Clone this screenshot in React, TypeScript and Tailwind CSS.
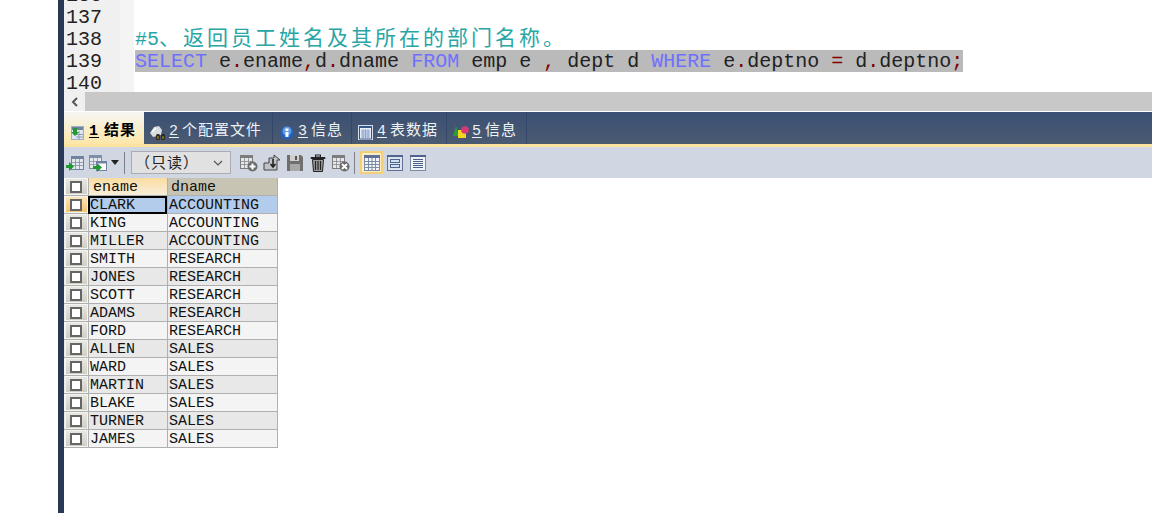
import type { ReactNode } from "react";

const MONO = "font-['Liberation_Mono','Courier_New',monospace]";
const CJK = "font-['Liberation_Mono','Noto_Sans_CJK_SC',monospace]";

const rows = [
  ["CLARK", "ACCOUNTING"],
  ["KING", "ACCOUNTING"],
  ["MILLER", "ACCOUNTING"],
  ["SMITH", "RESEARCH"],
  ["JONES", "RESEARCH"],
  ["SCOTT", "RESEARCH"],
  ["ADAMS", "RESEARCH"],
  ["FORD", "RESEARCH"],
  ["ALLEN", "SALES"],
  ["WARD", "SALES"],
  ["MARTIN", "SALES"],
  ["BLAKE", "SALES"],
  ["TURNER", "SALES"],
  ["JAMES", "SALES"],
];

function Kw({ children }: { children: ReactNode }) {
  return <span className="text-[#7070ff]">{children}</span>;
}

function Op({ children }: { children: ReactNode }) {
  return <span className="text-[#800000]">{children}</span>;
}

function Gutter({ n }: { n: number }) {
  return <div className="h-[22px] overflow-visible pl-[2px] leading-[24px]">{n}</div>;
}

function GridIcon({ x = 0, y = 0, tone = "#8a94a6" }: { x?: number; y?: number; tone?: string }) {
  return (
    <g transform={`translate(${x} ${y})`}>
      <rect x="0.5" y="0.5" width="12" height="13" fill="#e4e7ec" stroke={tone} />
      <rect x="0" y="0" width="13" height="3" fill={tone} />
      <path d="M1 6.5h11M1 9.5h11M4.5 3v10M8.5 3v10" stroke={tone} strokeOpacity="0.7" />
    </g>
  );
}

function TabIcon({ kind }: { kind: number }) {
  return (
    <svg width="16" height="16" viewBox="0 0 16 16" className="shrink-0">
      {kind === 1 && (
        <>
          <rect x="1.5" y="1.5" width="12" height="13" fill="#dfe6f0" stroke="#9fb0c6" />
          <rect x="2" y="2" width="11" height="3" fill="#6f829f" />
          <path d="M6 9.5h7M6 12h7M9 6v8" stroke="#8a9ab4" />
          <path d="M3 3h4v4h2l-4 4-4-4h2z" fill="#1f9a2c" />
        </>
      )}
      {kind === 2 && (
        <>
          <path d="M0 8l4-6 5-1 3 4-1 5-8 2z" fill="#d8dbe0" />
          <path d="M2 7l4-4" stroke="#fff" strokeWidth="1.5" />
          <rect x="6" y="9" width="4" height="6" rx="1.5" fill="#2a2a20" />
          <rect x="11" y="9" width="4" height="6" rx="1.5" fill="#2a2a20" />
          <path d="M8 11v3M13 11v3" stroke="#d0a030" />
        </>
      )}
      {kind === 3 && (
        <>
          <circle cx="8" cy="8" r="6.5" fill="#1f62c4" />
          <circle cx="8" cy="6" r="4.5" fill="#5f9be6" />
          <rect x="6.5" y="7" width="3" height="5" fill="#fff" />
          <rect x="6.5" y="3.5" width="3" height="2.5" fill="#fff" />
        </>
      )}
      {kind === 4 && (
        <>
          <rect x="0.5" y="0.5" width="14" height="14" fill="#e8eef8" stroke="#d5deea" />
          <rect x="1" y="1" width="13" height="2" fill="#35568f" />
          <path d="M1.5 3v11h12V3" fill="none" stroke="#35568f" />
          <path d="M3 6h9M3 8h9M3 10h9M3 12h9M5 4v9M7.5 4v9M10 4v9" stroke="#8ea4cc" />
        </>
      )}
      {kind === 5 && (
        <>
          <path d="M3 1l3 10H0z" fill="#2c9c3c" />
          <rect x="5" y="5" width="8" height="8" fill="#f4d820" />
          <circle cx="12" cy="5" r="3.8" fill="#d83a78" />
        </>
      )}
    </svg>
  );
}

function Tab({
  kind,
  num,
  label,
  active,
  className,
}: {
  kind: number;
  num: number;
  label: string;
  active?: boolean;
  className: string;
}) {
  return (
    <div
      className={`flex h-[32px] items-center gap-[3px] pl-[6px] pt-[9px] text-[15px] tracking-[1px] ${CJK} ${className} ${
        active
          ? "bg-gradient-to-b from-[#f6f6f2] to-[#fce6a8] font-bold text-black"
          : "border-r border-[#34466a] text-[#eef1f6]"
      }`}
    >
      <TabIcon kind={kind} />
      <span className="underline underline-offset-2">{num}</span>
      <span className={active ? "ml-[2px]" : ""}>{label}</span>
    </div>
  );
}

function ToolIcon({ kind }: { kind: string }) {
  return (
    <svg width="18" height="18" viewBox="0 0 18 18" className="shrink-0">
      {kind === "add" && (
        <>
          <GridIcon x={0} y={1} tone="#7d7d7d" />
          <circle cx="12.5" cy="12.5" r="5" fill="#6b6b6b" />
          <path d="M9.5 12.5h6M12.5 9.5v6" stroke="#fff" strokeWidth="2" />
        </>
      )}
      {kind === "dup" && (
        <>
          <path d="M1 9h5V4h5V1l6 5-3 0v10H1z" fill="#bfc3c9" stroke="#444" />
          <path d="M10 5v7M7.5 10l2.5 3 2.5-3" stroke="#222" strokeWidth="1.6" fill="none" />
        </>
      )}
      {kind === "save" && (
        <>
          <path d="M1 1h14l2 2v14H1z" fill="#6f6f6f" />
          <rect x="4" y="1" width="9" height="6" fill="#cfcfcf" />
          <rect x="9" y="2" width="2" height="4" fill="#555" />
          <rect x="4" y="10" width="10" height="7" fill="#a8a8a8" />
        </>
      )}
      {kind === "trash" && (
        <>
          <rect x="1.5" y="3" width="15" height="2" rx="1" fill="#222" />
          <rect x="6.5" y="1" width="5" height="2" fill="none" stroke="#222" />
          <path d="M3.5 5.5h11l-1 12h-9z" fill="#9c9c9c" stroke="#222" />
          <path d="M6.5 7v9M9 7v9M11.5 7v9" stroke="#222" strokeWidth="1.2" />
        </>
      )}
      {kind === "del" && (
        <>
          <GridIcon x={0} y={1} tone="#7d7d7d" />
          <circle cx="12.5" cy="12.5" r="5" fill="#6b6b6b" />
          <path d="M10 10l5 5M15 10l-5 5" stroke="#fff" strokeWidth="2" />
        </>
      )}
    </svg>
  );
}

function ViewButton({ active, children }: { active?: boolean; children: ReactNode }) {
  return (
    <div
      className={`flex h-[23px] w-[23px] items-center justify-center border-2 ${
        active ? "border-[#f3cf7c] bg-[#fdeec4]" : "border-transparent"
      }`}
    >
      <svg width="16" height="16" viewBox="0 0 16 16" className="shrink-0">
        {children}
      </svg>
    </div>
  );
}

function Check({ active }: { active?: boolean }) {
  return (
    <div
      className={`ml-[1px] flex h-[17px] w-[23px] shrink-0 items-center justify-center border border-[#f4f4f0] pr-[1px] ${
        active
          ? "bg-gradient-to-b from-[#fbe6b8] to-[#f5c56e]"
          : "bg-gradient-to-b from-[#e8e8e2] to-[#cfcfc6]"
      }`}
    >
      <div className="h-[12px] w-[12px] border-2 border-[#666] bg-white" />
    </div>
  );
}

export default function App() {
  return (
    <div className="flex h-[513px] w-[1152px] overflow-hidden bg-white">
      <div className="w-[58px] shrink-0" />
      <div className="w-[6px] shrink-0 bg-[#293955]" />
      <div className="flex min-w-0 flex-1 flex-col">
        {/* Editor */}
        <div className="flex h-[92px] shrink-0 overflow-hidden">
          <div className={`mt-[-16px] h-[108px] w-[56px] shrink-0 bg-[#f0f0f0] text-[20px] text-[#222] ${MONO}`}>
            <Gutter n={136} />
            <Gutter n={137} />
            <Gutter n={138} />
            <Gutter n={139} />
            <Gutter n={140} />
          </div>
          <div className="w-[14px] shrink-0 bg-[#f4f4f4] bg-[radial-gradient(#dcdcdc_0.5px,transparent_0.6px)] bg-[length:2px_2px]" />
          <div className="min-w-0 flex-1 pl-[1px] pt-[28px] text-[20px]">
            <div className={`h-[22px] whitespace-pre leading-[24px] text-[#2aa5a5] ${CJK}`}>
              #5<span className="text-[21px] tracking-[3px]">、返回员工姓名及其所在的部门名称。</span>
            </div>
            <div className={`h-[22px] w-[828px] whitespace-pre bg-[#bababa] leading-[24px] text-[#222] ${MONO}`}>
              <Kw>SELECT</Kw> e<Op>.</Op>ename<Op>,</Op>d<Op>.</Op>dname <Kw>FROM</Kw> emp e <Op>,</Op> dept d <Kw>WHERE</Kw> e<Op>.</Op>deptno <Op>=</Op> d<Op>.</Op>deptno<Op>;</Op>
            </div>
          </div>
        </div>

        {/* Horizontal scrollbar */}
        <div className="flex h-[19px] shrink-0 bg-[#c8c8c8]">
          <div className="flex w-[21px] items-center justify-center bg-[#f0f0f0]">
            <svg width="10" height="12" viewBox="0 0 10 12">
              <path d="M7 2L3 6l4 4" fill="none" stroke="#555" strokeWidth="2" />
            </svg>
          </div>
        </div>
        <div className="h-[1px] shrink-0 bg-white" />

        {/* Result tabs */}
        <div className="flex h-[32px] shrink-0 bg-gradient-to-b from-[#3b5074] to-[#4a5a70]">
          <Tab kind={1} num={1} label="结果" active className="w-[80px]" />
          <Tab kind={2} num={2} label="个配置文件" className="w-[129px]" />
          <Tab kind={3} num={3} label="信息" className="w-[79px]" />
          <Tab kind={4} num={4} label="表数据" className="w-[95px]" />
          <Tab kind={5} num={5} label="信息" className="w-[80px]" />
        </div>
        <div className="h-[3px] shrink-0 bg-[#fbe29e]" />

        {/* Toolbar */}
        <div className="flex h-[31px] shrink-0 items-center bg-[#d0d7e2] pl-[2px]">
          <svg width="18" height="18" viewBox="0 0 18 18" className="shrink-0">
            <GridIcon x={5} y={2} tone="#6f829f" />
            <path d="M0 11h3V8l5 4.5L3 17v-3H0z" fill="#1f9a2c" />
          </svg>
          <svg width="18" height="18" viewBox="0 0 18 18" className="ml-[5px] shrink-0">
            <GridIcon x={0} y={1} tone="#7f8da6" />
            <rect x="7.5" y="7.5" width="10" height="9" fill="#fff" stroke="#6f829f" />
            <rect x="7.5" y="7.5" width="10" height="2" fill="#6f829f" />
            <path d="M4 12h4V9l5 4.5L8 18v-3H4z" fill="#1f9a2c" />
          </svg>
          <svg width="8" height="5" viewBox="0 0 8 5" className="ml-[4px] shrink-0">
            <path d="M0 0h8L4 5z" fill="#222" />
          </svg>
          <div className="ml-[5px] h-[22px] w-[1px] bg-[#7a7f88]" />
          <div
            className={`ml-[6px] flex h-[23px] w-[100px] items-center justify-between border border-[#a9adb3] bg-[#e1e1e1] pl-[3px] pr-[7px] text-[15px] tracking-[1px] text-[#222] ${CJK}`}
          >
            <span className="pt-[5px]">（只读）</span>
            <svg width="10" height="6" viewBox="0 0 10 6">
              <path d="M1 1l4 4 4-4" fill="none" stroke="#555" strokeWidth="1.2" />
            </svg>
          </div>
          <div className="ml-[9px] flex items-center gap-[5px]">
            <ToolIcon kind="add" />
            <ToolIcon kind="dup" />
            <ToolIcon kind="save" />
            <ToolIcon kind="trash" />
            <ToolIcon kind="del" />
          </div>
          <div className="ml-[4px] h-[22px] w-[1px] bg-[#7a7f88]" />
          <div className="ml-[5px] flex items-center">
            <ViewButton active>
              <rect x="0.5" y="0.5" width="15" height="15" fill="#f4f4f8" stroke="#7b8aa5" />
              <rect x="0" y="0" width="16" height="3" fill="#5f7199" />
              <path d="M1 6.5h14M1 9.5h14M1 12.5h14M4.5 3v12M8 3v12M11.5 3v12" stroke="#7b8aa5" />
            </ViewButton>
            <ViewButton>
              <rect x="0.5" y="0.5" width="15" height="15" fill="#dde3ec" stroke="#5f7199" />
              <rect x="0" y="0" width="16" height="2" fill="#4f6590" />
              <rect x="3.5" y="4.5" width="9" height="3" fill="#cfe0f5" stroke="#4f6590" />
              <rect x="3.5" y="9.5" width="9" height="3" fill="#cfe0f5" stroke="#4f6590" />
            </ViewButton>
            <ViewButton>
              <rect x="0.5" y="0.5" width="15" height="15" fill="#f0f2f6" stroke="#7b8aa5" />
              <rect x="0" y="0" width="16" height="2" fill="#4f6590" />
              <path d="M3 4.5h10M3 6.5h10M3 8.5h10M3 10.5h10M3 12.5h10" stroke="#4a5f88" />
            </ViewButton>
          </div>
        </div>

        {/* Result grid */}
        <div className={`w-[214px] border-r border-[#b0b0b0] text-[15px] leading-[19px] text-[#111] ${MONO}`}>
          <div className="flex h-[18px] border-b border-[#b0b0b0]">
            <Check />
            <div className="w-[79px] border-l border-[#b0b0b0] bg-gradient-to-b from-[#fbdca0] to-[#f8eeda] pl-[4px]">ename</div>
            <div className="flex-1 border-l border-[#b0b0b0] bg-[#c8c4b4] pl-[3px]">dname</div>
          </div>
          {rows.map(([ename, dname], i) => (
            <div
              key={ename}
              className={`flex h-[18px] border-b border-[#b0b0b0] ${i % 2 === 0 && i > 0 ? "bg-[#e8e8e8]" : "bg-[#f4f4f4]"}`}
            >
              <Check active={i === 0} />
              {i === 0 ? (
                <div className="h-[18px] w-[79px] border-2 border-black bg-[#b4ccec] leading-[15px]">{ename}</div>
              ) : (
                <div className="w-[79px] border-l border-[#b0b0b0] pl-[1px]">{ename}</div>
              )}
              <div className={`flex-1 border-l border-[#b0b0b0] pl-[1px] ${i === 0 ? "bg-[#b4ccec]" : ""}`}>{dname}</div>
            </div>
          ))}
        </div>
      </div>
    </div>
  );
}
